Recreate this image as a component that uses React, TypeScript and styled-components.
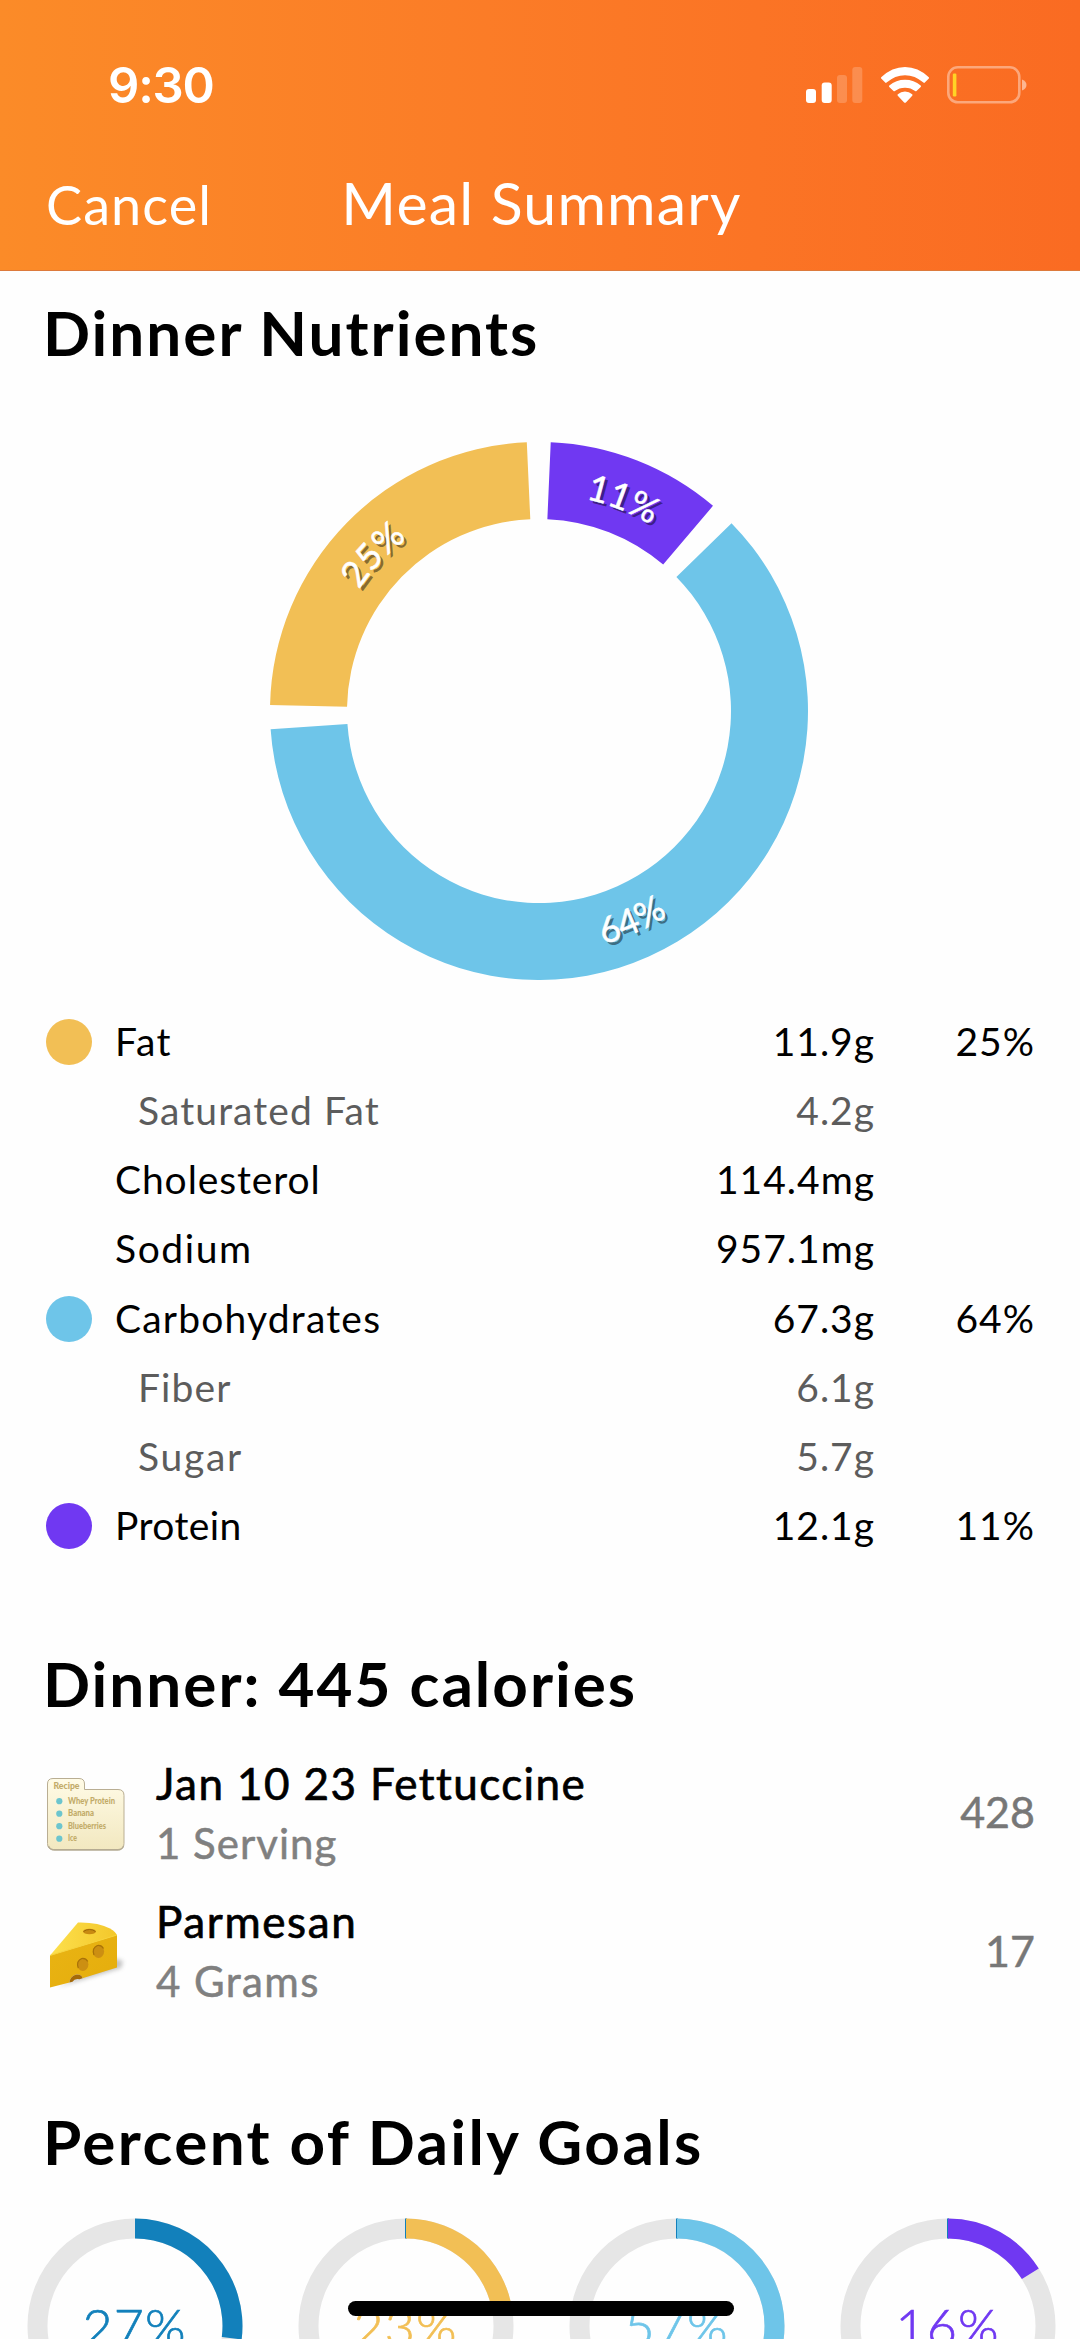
import React from "react";
import styled, { createGlobalStyle } from "styled-components";

const colors = {
  fat: "#f2bf55",
  carbs: "#6ec5e9",
  protein: "#7038f2",
  calories: "#1280bb",
  track: "#e6e6e6",
};

const GlobalStyle = createGlobalStyle`
  html, body { margin: 0; padding: 0; background: #fefefe; }
  body { font-family: Lato, "Open Sans", sans-serif; overflow: hidden; }
  * { box-sizing: border-box; }
`;

const Screen = styled.div`
  position: relative;
  width: 1080px;
  height: 2339px;
  overflow: hidden;
  background: #fefefe;
  color: #000;
`;

const Header = styled.header`
  height: 271px;
  color: #fff;
  background: linear-gradient(90deg, #fb8b28 0%, #fb7c27 45%, #fb7425 70%, #fa6b22 100%);
  border-bottom: 1px solid #dd7a3c;
`;

const StatusBar = styled.div`
  display: flex;
  justify-content: space-between;
  align-items: center;
  height: 168px;
  padding: 2px 52px 0 108px;
`;

const Clock = styled.span<{ $track: number }>`
  padding-top: 2px;
  font: 600 49px/60px Inter, sans-serif;
  letter-spacing: ${(p) => p.$track}px;
`;

const StatusIcons = styled.div`
  display: flex;
  align-items: center;
`;

const NavBar = styled.nav`
  display: grid;
  grid-template-columns: 340px 403px 337px;
  align-items: baseline;
`;

const Label = styled.span<{ $size: number; $track?: number; $weight?: number; $color?: string; $line?: number; $stroke?: number }>`
  font-size: ${(p) => p.$size}px;
  font-weight: ${(p) => p.$weight ?? 400};
  letter-spacing: ${(p) => p.$track ?? 0}px;
  line-height: ${(p) => p.$line ?? 70}px;
  color: ${(p) => p.$color ?? "inherit"};
  -webkit-text-stroke: ${(p) => p.$stroke ?? 0}px currentColor;
  white-space: nowrap;
`;

const CancelButton = styled.button`
  border: 0;
  padding: 0 0 0 46px;
  background: none;
  color: inherit;
  font-family: inherit;
  text-align: left;
`;

const Title = styled.h1`
  margin: 0;
  font-weight: 400;
  text-align: center;
`;

const Heading = styled.h2<{ $top: number; $track: number }>`
  margin: ${(p) => p.$top}px 0 0;
  padding-left: 43px;
  font-size: 62px;
  line-height: 80px;
  font-weight: 700;
  letter-spacing: ${(p) => p.$track}px;
  white-space: nowrap;
`;

const ChartArea = styled.div`
  display: flex;
  justify-content: center;
  padding: 70px 2px 27px 0;
  svg { display: block; }
`;

const SliceLabel = styled.text`
  font-family: Lato, sans-serif;
  font-size: 36px;
  letter-spacing: 0;
  text-anchor: middle;
`;

const NutrientTable = styled.div`
  display: flex;
  flex-direction: column;
`;

const NutrientRow = styled.div<{ $sub?: boolean }>`
  display: grid;
  grid-template-columns: 69px 1fr 260px 160px;
  align-items: center;
  height: 69.28px;
  padding: 0 45px 0 46px;
  color: ${(p) => (p.$sub ? "#5c5c5c" : "#000")};
`;

const Dot = styled.i<{ $color?: string }>`
  width: 46px;
  height: 46px;
  border-radius: 50%;
  background: ${(p) => p.$color ?? "transparent"};
`;

const Cell = styled.div<{ $end?: boolean; $indent?: boolean }>`
  display: flex;
  justify-content: ${(p) => (p.$end ? "flex-end" : "flex-start")};
  padding: 0 0 2px ${(p) => (p.$indent ? 23 : 0)}px;
`;

const FoodList = styled.div`
  margin-top: 22px;
`;

const FoodRow = styled.div`
  display: grid;
  grid-template-columns: 110px 1fr auto;
  align-items: center;
  height: 138.5px;
  padding: 0 45px 0 46px;
`;

const FoodText = styled.div`
  display: flex;
  flex-direction: column;
`;

const Calories = styled.div`
  display: flex;
  padding-bottom: 4px;
`;

const FoodIcon = styled.svg`
  display: block;
  width: 90px;
  height: 90px;
  margin-left: -3px;
`;

const Rings = styled.div`
  display: flex;
  width: 1084px;
  margin: 37px 0 0 -1px;
`;

const RingCell = styled.div<{ $color: string }>`
  display: grid;
  place-items: center;
  width: 271px;
  height: 216px;
  color: ${(p) => p.$color};
  > * { grid-area: 1 / 1; }
`;

const HomeBar = styled.div`
  position: absolute;
  left: 348px;
  top: 2301px;
  width: 386px;
  height: 15px;
  border-radius: 8px;
  background: #000;
`;

const point = (c: number, r: number, deg: number) => {
  const a = (deg * Math.PI) / 180;
  return `${(c + r * Math.sin(a)).toFixed(2)} ${(c - r * Math.cos(a)).toFixed(2)}`;
};

const ringPath = (c: number, outer: number, inner: number, from: number, to: number) => {
  const large = to - from > 180 ? 1 : 0;
  return `M${point(c, outer, from)}A${outer} ${outer} 0 ${large} 1 ${point(c, outer, to)}L${point(c, inner, to)}A${inner} ${inner} 0 ${large} 0 ${point(c, inner, from)}Z`;
};

const slices = [
  { id: "protein", text: "11%", color: colors.protein, from: 2.5, to: 40.3, at: 21.7, flip: false },
  { id: "carbs", text: "64%", color: colors.carbs, from: 45.7, to: 266.1, at: 156.2, flip: true },
  { id: "fat", text: "25%", color: colors.fat, from: 271.3, to: 357.4, at: 313.3, flip: false },
];

function Donut() {
  const c = 269;
  return (
    <svg width="538" height="538" viewBox="0 0 538 538">
      {slices.map((s) => {
        const r = s.flip ? 242 : 217;
        const arc = s.flip
          ? `M${point(c, r, s.at + 40)}A${r} ${r} 0 0 0 ${point(c, r, s.at - 40)}`
          : `M${point(c, r, s.at - 40)}A${r} ${r} 0 0 1 ${point(c, r, s.at + 40)}`;
        return (
          <g key={s.id}>
            <path d={ringPath(c, 269, 192, s.from, s.to)} fill={s.color} />
            <path id={`arc-${s.id}`} d={arc} fill="none" />
            <SliceLabel fill="#000" fillOpacity={0.45} transform="translate(3 3)">
              <textPath href={`#arc-${s.id}`} startOffset="50%">{s.text}</textPath>
            </SliceLabel>
            <SliceLabel fill="#fff" stroke="#fff" strokeWidth={0.5}>
              <textPath href={`#arc-${s.id}`} startOffset="50%">{s.text}</textPath>
            </SliceLabel>
          </g>
        );
      })}
    </svg>
  );
}

function Signal() {
  return (
    <svg width="222" height="40" viewBox="806 65 222 40" fill="#fff">
      <rect x="806" y="89" width="10" height="14" rx="3" />
      <rect x="821.7" y="82.5" width="10" height="20.5" rx="3" />
      <rect x="837" y="75" width="10" height="28" rx="3" opacity=".2" />
      <rect x="852.3" y="67" width="10" height="36" rx="3" opacity=".2" />
      <path d="M881.2 77.2Q892 67 905 67t23.800 10.200q.6.7 0 1.400l-4 4q-.7.6-1.400 0Q915 75.200 905 75.200t-18.400 7.400q-.7.6-1.400 0l-4-4q-.6-.7 0-1.400z" />
      <path d="M889.300 85.500Q896 79.700 905 79.700t15.700 5.800q.7.7 0 1.400l-4.200 4.100q-.7.6-1.400.1Q911 87.700 905 87.700t-10.100 3.400q-.7.5-1.400-.1l-4.200-4.100q-.7-.7 0-1.400z" />
      <path d="M897.800 94.300Q901 91.500 905 91.500t7.200 2.800q.7.7 0 1.400l-6.300 6.700q-.9.900-1.800 0l-6.300-6.700q-.7-.7 0-1.400z" />
      <rect x="948.300" y="67.300" width="71" height="35" rx="9.500" fill="none" stroke="#fff" strokeOpacity=".4" strokeWidth="2.600" />
      <path d="M1022 79.500q4.500 1.800 4.500 5.500t-4.500 5.500z" opacity=".5" />
      <rect x="952.800" y="73.500" width="3.600" height="23" rx="1.200" fill="#ffd426" />
    </svg>
  );
}

function RecipeIcon() {
  const lines = ["Whey Protein", "Banana", "Blueberries", "Ice"];
  const widths = [47, 26, 38, 9];
  return (
    <FoodIcon viewBox="43 1770 90 90">
      <defs>
        <linearGradient id="paper" x1="0" y1="0" x2="0" y2="1">
          <stop offset="0" stopColor="#fffbe6" />
          <stop offset="1" stopColor="#f2e8c0" />
        </linearGradient>
      </defs>
      <path d="M47.500 1785q0-5.500 5.500-5.500h26q5.500 0 5.500 5.500v5.500h33.500q6 0 6 6v48q0 6-6 6H53.500q-6 0-6-6z" fill="url(#paper)" stroke="#b9ae93" />
      <path d="M48.500 1847q1.500 4 6 4h63q4.500 0 6-4" fill="none" stroke="#b4ab93" strokeWidth="1.300" />
      <g fill="#c2ab68" fontFamily="Lato, sans-serif" fontWeight="900">
        <text x="53.500" y="1789.500" fontSize="9.500" textLength="26" lengthAdjust="spacingAndGlyphs">Recipe</text>
        {lines.map((t, i) => (
          <text key={t} x="68" y={1804.500 + i * 12.500} fontSize="9" textLength={widths[i]} lengthAdjust="spacingAndGlyphs">{t}</text>
        ))}
      </g>
      {lines.map((t, i) => (
        <circle key={t} cx="59.300" cy={1802.200 + i * 12.500} r="3.100" fill="#6cc5ce" />
      ))}
    </FoodIcon>
  );
}

function CheeseIcon() {
  return (
    <FoodIcon viewBox="43 1906 90 90">
      <defs>
        <linearGradient id="side" x1="0" y1="0" x2="1" y2="1">
          <stop offset="0" stopColor="#e9b414" />
          <stop offset="1" stopColor="#e5ad0c" />
        </linearGradient>
        <linearGradient id="top" x1="0" y1="0" x2="1" y2="0">
          <stop offset="0" stopColor="#fde04c" />
          <stop offset="1" stopColor="#f3c72b" />
        </linearGradient>
        <filter id="soft" x="-30%" y="-30%" width="160%" height="160%"><feGaussianBlur stdDeviation="2" /></filter>
      </defs>
      <path d="M58 1985L121 1966l2-7-10-3z" fill="#777" opacity=".45" filter="url(#soft)" />
      <path d="M50 1953.500L78 1920.500q20-.5 32 6 6 3.500 7 7z" fill="url(#top)" />
      <path d="M50 1953.500L117 1933v32.500l-34.500 10.700q-1-4.200-6-3.700-6.500 1.500-7 8L50 1985.500z" fill="url(#side)" />
      <path d="M50 1953.500L117 1933" stroke="#f7d43d" strokeWidth="1" />
      <path d="M69.500 1980.500q.5-6.500 7-8 5-.5 6 3.700l-3 1q-5-1-7 2.500z" fill="#a56a08" />
      <ellipse cx="89.500" cy="1929.500" rx="6.500" ry="2.800" fill="#c88a12" />
      <path d="M83.500 1929.500q6-4 12 0" fill="none" stroke="#9e6908" strokeWidth="1" />
      <ellipse cx="98.500" cy="1949.500" rx="5.600" ry="6.500" fill="#cc8f12" />
      <path d="M94 1953q-2.500-7 3.500-9.500 4-.5 6 3" fill="none" stroke="#a97208" strokeWidth="1.200" />
      <ellipse cx="82.800" cy="1962.500" rx="5.600" ry="6.500" fill="#cc8f12" />
      <path d="M78.300 1966q-2.500-7 3.500-9.500 4-.5 6 3" fill="none" stroke="#a97208" strokeWidth="1.200" />
    </FoodIcon>
  );
}

interface Nutrient { name: string; value: string; pct?: string; color?: string; sub?: boolean; track: number }

const nutrients: Nutrient[] = [
  { name: "Fat", value: "11.9g", pct: "25%", color: colors.fat, track: 1.6 },
  { name: "Saturated Fat", value: "4.2g", sub: true, track: 1.1 },
  { name: "Cholesterol", value: "114.4mg", track: 0.9 },
  { name: "Sodium", value: "957.1mg", track: 1.6 },
  { name: "Carbohydrates", value: "67.3g", pct: "64%", color: colors.carbs, track: 1.2 },
  { name: "Fiber", value: "6.1g", sub: true, track: 1.1 },
  { name: "Sugar", value: "5.7g", sub: true, track: 1.7 },
  { name: "Protein", value: "12.1g", pct: "11%", color: colors.protein, track: 0.4 },
];

const foods = [
  { name: "Jan 10 23 Fettuccine", amount: "1 Serving", calories: "428", icon: <RecipeIcon />, track: 1.4, subTrack: 1 },
  { name: "Parmesan", amount: "4 Grams", calories: "17", icon: <CheeseIcon />, track: 1.6, subTrack: 1.4 },
];

const goals = [
  { pct: 27, color: colors.calories },
  { pct: 23, color: colors.fat },
  { pct: 57, color: colors.carbs },
  { pct: 16, color: colors.protein },
];

export default function App() {
  return (
    <Screen>
      <GlobalStyle />
      <Header>
        <StatusBar>
          <Clock $track={-1.2}>9:30</Clock>
          <StatusIcons><Signal /></StatusIcons>
        </StatusBar>
        <NavBar>
          <CancelButton><Label $size={54} $track={1.1}>Cancel</Label></CancelButton>
          <Title><Label $size={59} $track={1.2}>Meal Summary</Label></Title>
        </NavBar>
      </Header>

      <Heading $top={21} $track={2}>Dinner Nutrients</Heading>
      <ChartArea><Donut /></ChartArea>
      <NutrientTable>
        {nutrients.map((n) => (
          <NutrientRow key={n.name} $sub={n.sub}>
            <Dot $color={n.color} />
            <Cell $indent={n.sub}><Label $size={39} $track={n.track} $line={60}>{n.name}</Label></Cell>
            <Cell $end><Label $size={39} $track={1} $line={60}>{n.value}</Label></Cell>
            <Cell $end><Label $size={39} $track={1} $line={60}>{n.pct}</Label></Cell>
          </NutrientRow>
        ))}
      </NutrientTable>

      <Heading $top={82} $track={2}>Dinner: 445 calories</Heading>
      <FoodList>
        {foods.map((f) => (
          <FoodRow key={f.name}>
            {f.icon}
            <FoodText>
              <Label $size={44} $track={f.track} $line={58} $stroke={0.7}>{f.name}</Label>
              <Label $size={42} $track={f.subTrack} $line={63} $color="#808080" $stroke={0.5}>{f.amount}</Label>
            </FoodText>
            <Calories><Label $size={43} $color="#777" $line={62} $stroke={0.5}>{f.calories}</Label></Calories>
          </FoodRow>
        ))}
      </FoodList>

      <Heading $top={79} $track={2.4}>Percent of Daily Goals</Heading>
      <Rings>
        {goals.map((g, i) => (
          <RingCell key={g.pct} $color={g.color}>
            <svg width="216" height="216" viewBox="0 0 216 216">
              <circle cx="108" cy="108" r="97.500" fill="none" stroke={colors.track} strokeWidth="20" />
              {i > 0 && <path d="M107 .5h2v20h-2z" fill={colors.calories} />}
              <path d={ringPath(108, 107.5, 87.5, 0, g.pct * 3.6)} fill={g.color} />
            </svg>
            <Label $size={52} $weight={300} $track={1} $stroke={0.7}>{g.pct}%</Label>
          </RingCell>
        ))}
      </Rings>
      <HomeBar />
    </Screen>
  );
}
